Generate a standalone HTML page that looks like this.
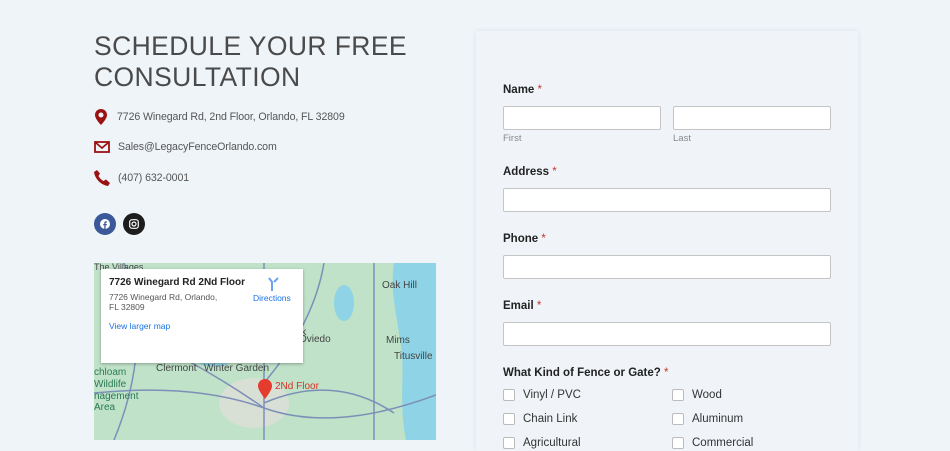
<!DOCTYPE html>
<html><head><meta charset="utf-8"><style>
*{box-sizing:border-box;margin:0;padding:0}
body{width:950px;height:440px;overflow:hidden;background:#eff4f9;font-family:"Liberation Sans",Arial,sans-serif;position:relative}
h1{position:absolute;left:94px;top:31px;font-weight:normal;font-size:26.5px;line-height:31px;letter-spacing:0.4px;color:#4a4a4a;font-family:"Liberation Sans",sans-serif}
.info{position:absolute;left:94px;font-size:10.6px;color:#555;display:flex;align-items:center;letter-spacing:-0.1px}
.info svg{margin-right:8px}
.soc{position:absolute;top:213px;width:22px;height:22px;border-radius:50%;display:flex;align-items:center;justify-content:center}
.card{position:absolute;left:476px;top:31px;width:382px;height:420px;background:#f0f4f9;box-shadow:0 0 6px rgba(0,0,0,.08);border-radius:2px}
.lbl{position:absolute;left:503px;font-size:11.5px;font-weight:bold;color:#222}
.lbl span{color:#c0392b;font-weight:normal}
.in{position:absolute;height:24px;background:#fff;border:1px solid #c4c4c4;border-radius:2px}
.sub{position:absolute;font-size:9.5px;color:#888}
.cb{position:absolute;font-size:11.5px;color:#333;display:flex;align-items:center}
.cb i{display:inline-block;width:12px;height:12px;border:1px solid #bbb;background:#fff;border-radius:2px;margin-right:8px}
.map{position:absolute;left:94px;top:263px;width:342px;height:177px;background:#b9dfc4;overflow:hidden}
</style></head><body>
<h1>SCHEDULE YOUR FREE<br>CONSULTATION</h1>
<div class="info" style="top:109px"><svg width="14" height="16" viewBox="0 0 14 16"><path d="M7 0C3.5 0 1 2.6 1 6c0 4 6 10 6 10s6-6 6-10C13 2.6 10.5 0 7 0zm0 8.5a2.5 2.5 0 110-5 2.5 2.5 0 010 5z" fill="#9b1212"/></svg><span style="margin-left:1px">7726 Winegard Rd, 2nd Floor, Orlando, FL 32809</span></div>
<div class="info" style="top:141px"><svg width="16" height="12" viewBox="0 0 16 12"><rect x="1" y="1" width="14" height="10" fill="none" stroke="#9b1212" stroke-width="1.8"/><path d="M1 1l7 6 7-6" fill="none" stroke="#9b1212" stroke-width="1.8"/></svg><span>Sales@LegacyFenceOrlando.com</span></div>
<div class="info" style="top:170px"><svg width="16" height="16" viewBox="0 0 16 16"><path d="M3 0l3 3.5-1.5 2.5c1 2 3 4 5 5l2.5-1.5L16 13l-2 3C7 15 1 9 0 2z" fill="#9b1212"/></svg><span>(407) 632-0001</span></div>
<div class="soc" style="left:94px;background:#3b5998"><svg width="10" height="10" viewBox="0 0 10 10"><circle cx="5" cy="5" r="5" fill="#fff"/><path d="M5.6 10V6.3h1.1l.2-1.3H5.6v-.8c0-.4.1-.6.6-.6h.7V2.4c-.3 0-.6-.1-1-.1-1 0-1.6.6-1.6 1.6V5H3.2v1.3h1.1V10z" fill="#3b5998"/></svg></div>
<div class="soc" style="left:123px;background:#1d1d1d"><svg width="10" height="10" viewBox="0 0 10 10"><rect x=".7" y=".7" width="8.6" height="8.6" rx="2.3" fill="none" stroke="#fff" stroke-width="1.2"/><circle cx="5" cy="5" r="2" fill="none" stroke="#fff" stroke-width="1.2"/></svg></div>
<div class="map">
<svg width="342" height="177" viewBox="0 0 342 177" style="position:absolute;left:0;top:0">
<rect width="342" height="177" fill="#bfe2c8"/>
<path d="M300 0h42v177h-30c-8-40 0-70-6-100-4-30-10-50-6-77z" fill="#8ed3e6"/>
<ellipse cx="120" cy="90" rx="22" ry="14" fill="#8ed3e6"/>
<ellipse cx="250" cy="40" rx="10" ry="18" fill="#8ed3e6"/>
<ellipse cx="160" cy="140" rx="35" ry="25" fill="#d8e0d6"/>
<g stroke="#7d8fb8" stroke-width="1.5" fill="none">
<path d="M0 130 Q100 120 170 145 T342 132"/><path d="M170 0 V177"/><path d="M60 80 Q120 110 170 145"/>
<path d="M170 140 Q240 110 300 150"/><path d="M230 0 Q220 60 170 120"/><path d="M280 0 V177"/><path d="M30 0 Q60 80 20 177"/>
</g>
<text x="145" y="59" font-size="10" fill="#444" font-family="Liberation Sans">Springs</text>
<text x="160" y="72" font-size="10" fill="#444" font-family="Liberation Sans">Winter Park</text>
<text x="205" y="79" font-size="10" fill="#444" font-family="Liberation Sans">Oviedo</text>
<text x="62" y="108" font-size="10" fill="#444" font-family="Liberation Sans">Clermont</text>
<text x="110" y="108" font-size="10" fill="#444" font-family="Liberation Sans">Winter Garden</text>
<text x="292" y="80" font-size="10" fill="#444" font-family="Liberation Sans">Mims</text>
<text x="300" y="96" font-size="10" fill="#444" font-family="Liberation Sans">Titusville</text>
<text x="288" y="25" font-size="10" fill="#444" font-family="Liberation Sans">Oak Hill</text>
<text x="0" y="112" font-size="10" fill="#2a7a55" font-family="Liberation Sans">chloam</text>
<text x="0" y="124" font-size="10" fill="#2a7a55" font-family="Liberation Sans">Wildlife</text>
<text x="0" y="136" font-size="10" fill="#2a7a55" font-family="Liberation Sans">nagement</text>
<text x="0" y="147" font-size="10" fill="#2a7a55" font-family="Liberation Sans">Area</text>
<text x="0" y="7" font-size="9" fill="#444" font-family="Liberation Sans">The Villages</text>
<path d="M171 136c-6-8-7-11-7-13a7 7 0 0114 0c0 2-1 5-7 13z" fill="#e53b2f"/>
<text x="181" y="126" font-size="10" fill="#d93025" font-family="Liberation Sans">2Nd Floor</text>
</svg>
<div style="position:absolute;left:7px;top:6px;width:202px;height:94px;background:#fff;box-shadow:0 1px 3px rgba(0,0,0,.3)">
<div style="position:absolute;left:8px;top:8px;font-size:10px;font-weight:bold;color:#222">7726 Winegard Rd 2Nd Floor</div>
<div style="position:absolute;left:8px;top:23px;width:120px;font-size:8.5px;color:#555;line-height:10px">7726 Winegard Rd, Orlando, FL 32809</div>
<div style="position:absolute;left:8px;top:52px;font-size:8.5px;color:#1a73e8">View larger map</div>
<div style="position:absolute;left:152px;top:24px;font-size:8.5px;color:#1a73e8">Directions</div>
<svg style="position:absolute;left:166px;top:8px" width="12" height="14" viewBox="0 0 12 14"><path d="M2 1l3 4v9M11 1L7 5" stroke="#6ca0f0" stroke-width="2" fill="none"/></svg>
</div>
</div>
<div class="card"></div>
<div class="lbl" style="top:84px">Name <span>*</span></div>
<div class="in" style="left:503px;top:106px;width:158px"></div>
<div class="in" style="left:673px;top:106px;width:158px"></div>
<div class="sub" style="left:503px;top:133px">First</div>
<div class="sub" style="left:673px;top:133px">Last</div>
<div class="lbl" style="top:166px">Address <span>*</span></div>
<div class="in" style="left:503px;top:188px;width:328px"></div>
<div class="lbl" style="top:233px">Phone <span>*</span></div>
<div class="in" style="left:503px;top:255px;width:328px"></div>
<div class="lbl" style="top:300px">Email <span>*</span></div>
<div class="in" style="left:503px;top:322px;width:328px"></div>
<div class="lbl" style="top:367px">What Kind of Fence or Gate? <span>*</span></div>
<div class="cb" style="left:503px;top:389px"><i></i>Vinyl / PVC</div>
<div class="cb" style="left:672px;top:389px"><i></i>Wood</div>
<div class="cb" style="left:503px;top:413px"><i></i>Chain Link</div>
<div class="cb" style="left:672px;top:413px"><i></i>Aluminum</div>
<div class="cb" style="left:503px;top:437px"><i></i>Agricultural</div>
<div class="cb" style="left:672px;top:437px"><i></i>Commercial</div>
</body></html>
